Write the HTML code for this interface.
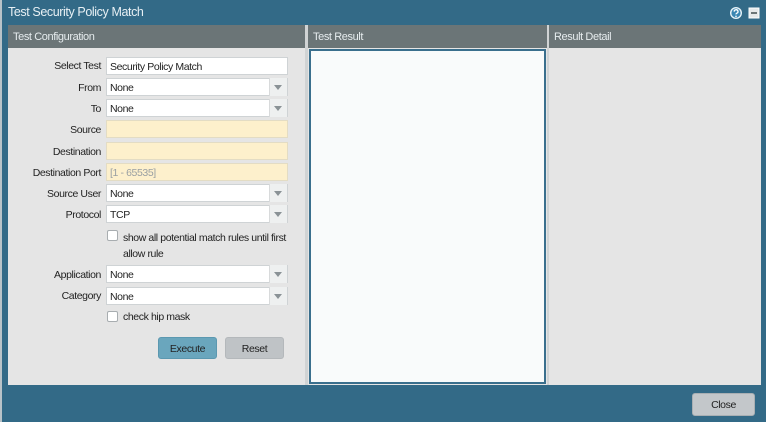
<!DOCTYPE html>
<html><head><meta charset="utf-8"><style>
*{margin:0;padding:0;box-sizing:border-box}
body{width:770px;height:425px;background:#fff;position:relative;overflow:hidden;font-family:"Liberation Sans",sans-serif;font-size:10.5px;color:#222;letter-spacing:-0.4px}
.a{position:absolute}
#win{left:2px;top:0;width:764px;height:422px;background:#336a87}
#edge{left:0;top:0;width:2px;height:422px;background:#b9c3c8}
.title{left:8px;top:5px;color:#e8f0f4;font-size:12.5px}
.ph{background:#6b7577;color:#e6ecee;font-size:11px;padding:6px 0 0 5px;height:23px;top:25px}
.pb{background:#e5e5e5}
.lbl{width:96px;text-align:right;left:5px}
.f{left:106px;width:182px;height:18px;background:#fff;border:1px solid #cfd3d5;padding:3px 0 0 3px}
.y{background:#fdf0cc;border-color:#e3dcc4}
.dd::after{content:"";position:absolute;right:0;top:-1px;width:17px;height:18px;border-left:1px solid #d8dadb;background:#eef0f0}
.dd::before{content:"";position:absolute;right:5px;top:6px;border-left:4px solid transparent;border-right:4px solid transparent;border-top:5px solid #8a9296;z-index:2}
.cb{width:11px;height:11px;background:#fff;border:1px solid #a8adb0;border-radius:2px}
.btn{height:22px;border-radius:3px;text-align:center;padding-top:5px;font-size:10.5px}
</style></head><body>
<div class="a" id="edge"></div>
<div class="a" id="win"></div>
<div class="a title">Test Security Policy Match</div>
<svg class="a" style="left:729px;top:6px" width="32" height="14">
<circle cx="7" cy="7" r="6" fill="#e8f3f8"/><circle cx="7" cy="7" r="4.6" fill="#3a86b2"/>
<path d="M5.2 5.6a1.9 1.8 0 1 1 2.6 1.6c-.6.3-.8.6-.8 1.2" stroke="#fff" stroke-width="1.3" fill="none"/><circle cx="7" cy="10.3" r=".8" fill="#fff"/>
<rect x="20" y="2" width="10" height="10" fill="#e6e9ea" stroke="#fff"/><rect x="22" y="6" width="6" height="2" fill="#6b7577"/>
</svg>
<div class="a ph" style="left:8px;width:297px">Test Configuration</div>
<div class="a pb" style="left:8px;top:48px;width:297px;height:337px"></div>
<div class="a" style="left:305px;top:25px;width:3px;height:360px;background:#d0d3d4"></div>
<div class="a ph" style="left:308px;width:239px">Test Result</div>
<div class="a" style="left:308px;top:48px;width:239px;height:337px;background:#e5e5e5"></div>
<div class="a" style="left:309px;top:49px;width:237px;height:335px;background:#f9fbfb;border:2px solid #3a6f8d"></div>
<div class="a" style="left:547px;top:25px;width:2px;height:360px;background:#d0d3d4"></div>
<div class="a ph" style="left:549px;width:212px">Result Detail</div>
<div class="a pb" style="left:549px;top:48px;width:212px;height:337px"></div>

<div class="a lbl" style="top:60px">Select Test</div><div class="a f" style="top:57px">Security Policy Match</div>
<div class="a lbl" style="top:82px">From</div><div class="a f dd" style="top:78px">None</div>
<div class="a lbl" style="top:103px">To</div><div class="a f dd" style="top:99px">None</div>
<div class="a lbl" style="top:124px">Source</div><div class="a f y" style="top:120px"></div>
<div class="a lbl" style="top:146px">Destination</div><div class="a f y" style="top:142px"></div>
<div class="a lbl" style="top:167px">Destination Port</div><div class="a f y" style="top:163px;color:#9aa0a3">[1 - 65535]</div>
<div class="a lbl" style="top:188px">Source User</div><div class="a f dd" style="top:184px">None</div>
<div class="a lbl" style="top:209px">Protocol</div><div class="a f dd" style="top:205px">TCP</div>
<div class="a cb" style="left:107px;top:230px"></div>
<div class="a" style="left:123px;top:230px;line-height:16px">show all potential match rules until first<br>allow rule</div>
<div class="a lbl" style="top:269px">Application</div><div class="a f dd" style="top:265px">None</div>
<div class="a lbl" style="top:290px">Category</div><div class="a f dd" style="top:287px">None</div>
<div class="a cb" style="left:107px;top:311px"></div>
<div class="a" style="left:123px;top:311px">check hip mask</div>
<div class="a btn" style="left:158px;top:337px;width:59px;background:#6aa6bd;border:1px solid #5b98b0">Execute</div>
<div class="a btn" style="left:225px;top:337px;width:59px;background:#bfc3c6;border:1px solid #b4b8bb">Reset</div>
<div class="a btn" style="left:692px;top:393px;width:63px;height:23px;background:#c3c7ca;border:1px solid #a9afb3">Close</div>
</body></html>
